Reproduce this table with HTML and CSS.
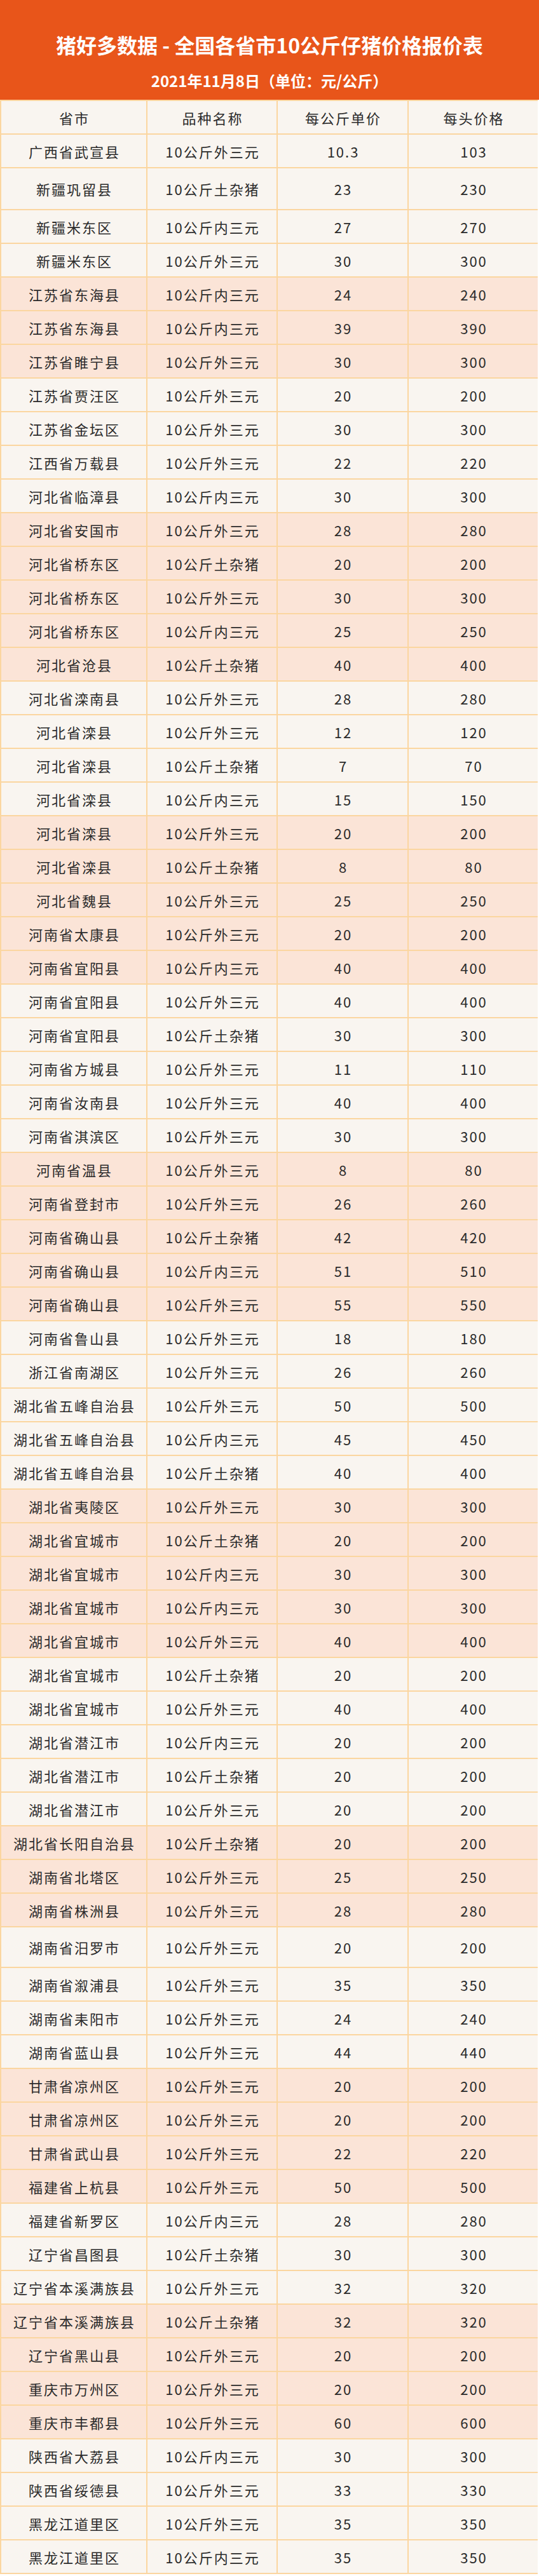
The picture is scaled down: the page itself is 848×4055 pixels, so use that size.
FILE: index.html
```html
<!DOCTYPE html>
<html lang="zh-CN">
<head>
<meta charset="utf-8">
<title>猪好多数据 - 全国各省市10公斤仔猪价格报价表</title>
<link rel="stylesheet" href="styles.css">
</head>
<body>
<div class="page">
  <header class="banner">
    <h1 class="title">猪好多数据 - 全国各省市10公斤仔猪价格报价表</h1>
    <p class="subtitle">2021年11月8日（单位：元/公斤）</p>
  </header>
  <div class="grid">
    <div class="row head"><div class="cell">省市</div><div class="cell">品种名称</div><div class="cell">每公斤单价</div><div class="cell">每头价格</div></div>
    <div class="row"><div class="cell">广西省武宣县</div><div class="cell">10公斤外三元</div><div class="cell">10.3</div><div class="cell">103</div></div>
    <div class="row tall"><div class="cell">新疆巩留县</div><div class="cell">10公斤土杂猪</div><div class="cell">23</div><div class="cell">230</div></div>
    <div class="row"><div class="cell">新疆米东区</div><div class="cell">10公斤内三元</div><div class="cell">27</div><div class="cell">270</div></div>
    <div class="row"><div class="cell">新疆米东区</div><div class="cell">10公斤外三元</div><div class="cell">30</div><div class="cell">300</div></div>
    <div class="row peach"><div class="cell">江苏省东海县</div><div class="cell">10公斤内三元</div><div class="cell">24</div><div class="cell">240</div></div>
    <div class="row peach"><div class="cell">江苏省东海县</div><div class="cell">10公斤内三元</div><div class="cell">39</div><div class="cell">390</div></div>
    <div class="row peach"><div class="cell">江苏省睢宁县</div><div class="cell">10公斤外三元</div><div class="cell">30</div><div class="cell">300</div></div>
    <div class="row"><div class="cell">江苏省贾汪区</div><div class="cell">10公斤外三元</div><div class="cell">20</div><div class="cell">200</div></div>
    <div class="row"><div class="cell">江苏省金坛区</div><div class="cell">10公斤外三元</div><div class="cell">30</div><div class="cell">300</div></div>
    <div class="row"><div class="cell">江西省万载县</div><div class="cell">10公斤外三元</div><div class="cell">22</div><div class="cell">220</div></div>
    <div class="row"><div class="cell">河北省临漳县</div><div class="cell">10公斤内三元</div><div class="cell">30</div><div class="cell">300</div></div>
    <div class="row peach"><div class="cell">河北省安国市</div><div class="cell">10公斤外三元</div><div class="cell">28</div><div class="cell">280</div></div>
    <div class="row peach"><div class="cell">河北省桥东区</div><div class="cell">10公斤土杂猪</div><div class="cell">20</div><div class="cell">200</div></div>
    <div class="row peach"><div class="cell">河北省桥东区</div><div class="cell">10公斤外三元</div><div class="cell">30</div><div class="cell">300</div></div>
    <div class="row peach"><div class="cell">河北省桥东区</div><div class="cell">10公斤内三元</div><div class="cell">25</div><div class="cell">250</div></div>
    <div class="row peach"><div class="cell">河北省沧县</div><div class="cell">10公斤土杂猪</div><div class="cell">40</div><div class="cell">400</div></div>
    <div class="row"><div class="cell">河北省滦南县</div><div class="cell">10公斤外三元</div><div class="cell">28</div><div class="cell">280</div></div>
    <div class="row"><div class="cell">河北省滦县</div><div class="cell">10公斤外三元</div><div class="cell">12</div><div class="cell">120</div></div>
    <div class="row"><div class="cell">河北省滦县</div><div class="cell">10公斤土杂猪</div><div class="cell">7</div><div class="cell">70</div></div>
    <div class="row"><div class="cell">河北省滦县</div><div class="cell">10公斤内三元</div><div class="cell">15</div><div class="cell">150</div></div>
    <div class="row peach"><div class="cell">河北省滦县</div><div class="cell">10公斤外三元</div><div class="cell">20</div><div class="cell">200</div></div>
    <div class="row peach"><div class="cell">河北省滦县</div><div class="cell">10公斤土杂猪</div><div class="cell">8</div><div class="cell">80</div></div>
    <div class="row peach"><div class="cell">河北省魏县</div><div class="cell">10公斤外三元</div><div class="cell">25</div><div class="cell">250</div></div>
    <div class="row peach"><div class="cell">河南省太康县</div><div class="cell">10公斤外三元</div><div class="cell">20</div><div class="cell">200</div></div>
    <div class="row peach"><div class="cell">河南省宜阳县</div><div class="cell">10公斤内三元</div><div class="cell">40</div><div class="cell">400</div></div>
    <div class="row"><div class="cell">河南省宜阳县</div><div class="cell">10公斤外三元</div><div class="cell">40</div><div class="cell">400</div></div>
    <div class="row"><div class="cell">河南省宜阳县</div><div class="cell">10公斤土杂猪</div><div class="cell">30</div><div class="cell">300</div></div>
    <div class="row"><div class="cell">河南省方城县</div><div class="cell">10公斤外三元</div><div class="cell">11</div><div class="cell">110</div></div>
    <div class="row"><div class="cell">河南省汝南县</div><div class="cell">10公斤外三元</div><div class="cell">40</div><div class="cell">400</div></div>
    <div class="row"><div class="cell">河南省淇滨区</div><div class="cell">10公斤外三元</div><div class="cell">30</div><div class="cell">300</div></div>
    <div class="row peach"><div class="cell">河南省温县</div><div class="cell">10公斤外三元</div><div class="cell">8</div><div class="cell">80</div></div>
    <div class="row peach"><div class="cell">河南省登封市</div><div class="cell">10公斤外三元</div><div class="cell">26</div><div class="cell">260</div></div>
    <div class="row peach"><div class="cell">河南省确山县</div><div class="cell">10公斤土杂猪</div><div class="cell">42</div><div class="cell">420</div></div>
    <div class="row peach"><div class="cell">河南省确山县</div><div class="cell">10公斤内三元</div><div class="cell">51</div><div class="cell">510</div></div>
    <div class="row peach"><div class="cell">河南省确山县</div><div class="cell">10公斤外三元</div><div class="cell">55</div><div class="cell">550</div></div>
    <div class="row"><div class="cell">河南省鲁山县</div><div class="cell">10公斤外三元</div><div class="cell">18</div><div class="cell">180</div></div>
    <div class="row"><div class="cell">浙江省南湖区</div><div class="cell">10公斤外三元</div><div class="cell">26</div><div class="cell">260</div></div>
    <div class="row"><div class="cell">湖北省五峰自治县</div><div class="cell">10公斤外三元</div><div class="cell">50</div><div class="cell">500</div></div>
    <div class="row"><div class="cell">湖北省五峰自治县</div><div class="cell">10公斤内三元</div><div class="cell">45</div><div class="cell">450</div></div>
    <div class="row"><div class="cell">湖北省五峰自治县</div><div class="cell">10公斤土杂猪</div><div class="cell">40</div><div class="cell">400</div></div>
    <div class="row peach"><div class="cell">湖北省夷陵区</div><div class="cell">10公斤外三元</div><div class="cell">30</div><div class="cell">300</div></div>
    <div class="row peach"><div class="cell">湖北省宜城市</div><div class="cell">10公斤土杂猪</div><div class="cell">20</div><div class="cell">200</div></div>
    <div class="row peach"><div class="cell">湖北省宜城市</div><div class="cell">10公斤内三元</div><div class="cell">30</div><div class="cell">300</div></div>
    <div class="row peach"><div class="cell">湖北省宜城市</div><div class="cell">10公斤内三元</div><div class="cell">30</div><div class="cell">300</div></div>
    <div class="row peach"><div class="cell">湖北省宜城市</div><div class="cell">10公斤外三元</div><div class="cell">40</div><div class="cell">400</div></div>
    <div class="row"><div class="cell">湖北省宜城市</div><div class="cell">10公斤土杂猪</div><div class="cell">20</div><div class="cell">200</div></div>
    <div class="row"><div class="cell">湖北省宜城市</div><div class="cell">10公斤外三元</div><div class="cell">40</div><div class="cell">400</div></div>
    <div class="row"><div class="cell">湖北省潜江市</div><div class="cell">10公斤内三元</div><div class="cell">20</div><div class="cell">200</div></div>
    <div class="row"><div class="cell">湖北省潜江市</div><div class="cell">10公斤土杂猪</div><div class="cell">20</div><div class="cell">200</div></div>
    <div class="row"><div class="cell">湖北省潜江市</div><div class="cell">10公斤外三元</div><div class="cell">20</div><div class="cell">200</div></div>
    <div class="row peach"><div class="cell">湖北省长阳自治县</div><div class="cell">10公斤土杂猪</div><div class="cell">20</div><div class="cell">200</div></div>
    <div class="row peach"><div class="cell">湖南省北塔区</div><div class="cell">10公斤外三元</div><div class="cell">25</div><div class="cell">250</div></div>
    <div class="row peach"><div class="cell">湖南省株洲县</div><div class="cell">10公斤外三元</div><div class="cell">28</div><div class="cell">280</div></div>
    <div class="row tall2"><div class="cell">湖南省汨罗市</div><div class="cell">10公斤外三元</div><div class="cell">20</div><div class="cell">200</div></div>
    <div class="row"><div class="cell">湖南省溆浦县</div><div class="cell">10公斤外三元</div><div class="cell">35</div><div class="cell">350</div></div>
    <div class="row"><div class="cell">湖南省耒阳市</div><div class="cell">10公斤外三元</div><div class="cell">24</div><div class="cell">240</div></div>
    <div class="row"><div class="cell">湖南省蓝山县</div><div class="cell">10公斤外三元</div><div class="cell">44</div><div class="cell">440</div></div>
    <div class="row peach"><div class="cell">甘肃省凉州区</div><div class="cell">10公斤外三元</div><div class="cell">20</div><div class="cell">200</div></div>
    <div class="row peach"><div class="cell">甘肃省凉州区</div><div class="cell">10公斤外三元</div><div class="cell">20</div><div class="cell">200</div></div>
    <div class="row peach"><div class="cell">甘肃省武山县</div><div class="cell">10公斤外三元</div><div class="cell">22</div><div class="cell">220</div></div>
    <div class="row peach"><div class="cell">福建省上杭县</div><div class="cell">10公斤外三元</div><div class="cell">50</div><div class="cell">500</div></div>
    <div class="row"><div class="cell">福建省新罗区</div><div class="cell">10公斤内三元</div><div class="cell">28</div><div class="cell">280</div></div>
    <div class="row"><div class="cell">辽宁省昌图县</div><div class="cell">10公斤土杂猪</div><div class="cell">30</div><div class="cell">300</div></div>
    <div class="row"><div class="cell">辽宁省本溪满族县</div><div class="cell">10公斤外三元</div><div class="cell">32</div><div class="cell">320</div></div>
    <div class="row peach"><div class="cell">辽宁省本溪满族县</div><div class="cell">10公斤土杂猪</div><div class="cell">32</div><div class="cell">320</div></div>
    <div class="row peach"><div class="cell">辽宁省黑山县</div><div class="cell">10公斤外三元</div><div class="cell">20</div><div class="cell">200</div></div>
    <div class="row peach"><div class="cell">重庆市万州区</div><div class="cell">10公斤外三元</div><div class="cell">20</div><div class="cell">200</div></div>
    <div class="row peach"><div class="cell">重庆市丰都县</div><div class="cell">10公斤外三元</div><div class="cell">60</div><div class="cell">600</div></div>
    <div class="row"><div class="cell">陕西省大荔县</div><div class="cell">10公斤内三元</div><div class="cell">30</div><div class="cell">300</div></div>
    <div class="row"><div class="cell">陕西省绥德县</div><div class="cell">10公斤外三元</div><div class="cell">33</div><div class="cell">330</div></div>
    <div class="row"><div class="cell">黑龙江道里区</div><div class="cell">10公斤外三元</div><div class="cell">35</div><div class="cell">350</div></div>
    <div class="row"><div class="cell">黑龙江道里区</div><div class="cell">10公斤内三元</div><div class="cell">35</div><div class="cell">350</div></div>
  </div>
</div>
</body>
</html>
```

FILE: styles.css
```css
html, body {
  margin: 0;
  padding: 0;
  background: #ffffff;
}

body {
  font-family: "Noto Sans CJK SC", "Noto Sans", sans-serif;
  color: #2b2b2b;
}

.page {
  width: 848px;
}

.banner {
  height: 157px;
  box-sizing: border-box;
  background: #e8551a;
  color: #ffffff;
  display: flex;
  flex-direction: column;
  align-items: center;
  padding-top: 50px;
  gap: 22px;
}

.title {
  margin: 0;
  font-size: 32px;
  line-height: 40px;
  font-weight: 700;
  letter-spacing: 0;
}

.subtitle {
  margin: 0;
  font-size: 24px;
  line-height: 30px;
  font-weight: 700;
}

.grid {
  display: grid;
  width: 846px;
  box-sizing: border-box;
  grid-template-columns: 228px 203px 204px 203px;
  grid-auto-rows: minmax(51px, auto);
  gap: 2px;
  padding: 2px;
  background: #fbd6a0;
}

.row {
  display: contents;
}

.cell {
  background: #f9f5f0;
  display: flex;
  align-items: center;
  justify-content: center;
  font-size: 22px;
  letter-spacing: 2px;
  padding-left: 2px;
  white-space: nowrap;
}

.row.peach .cell {
  background: #fbe4d7;
}

.row.tall .cell {
  min-height: 64px;
}

.row.tall2 .cell {
  min-height: 62px;
}
```
